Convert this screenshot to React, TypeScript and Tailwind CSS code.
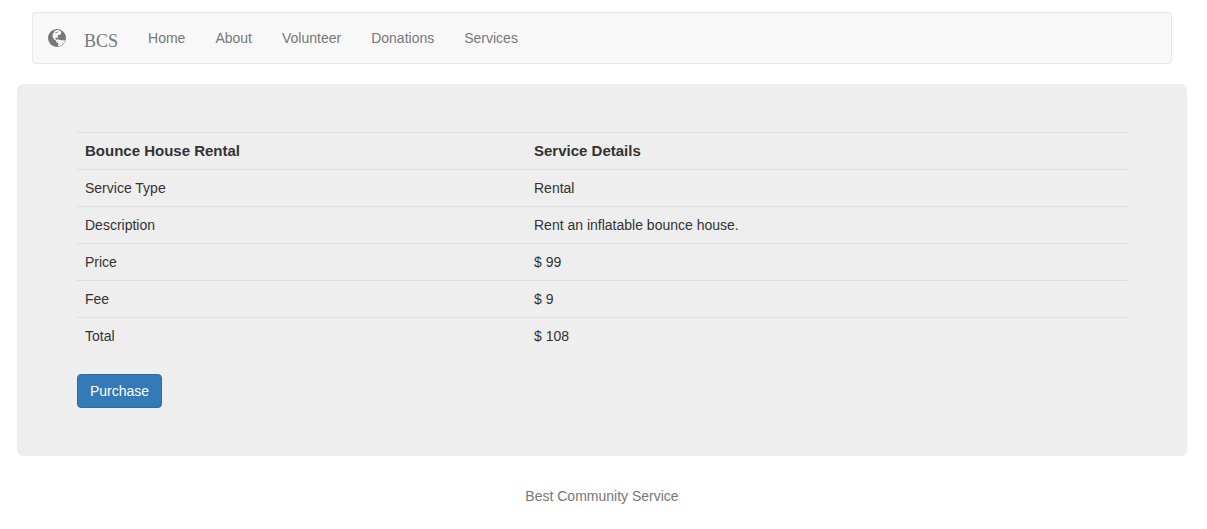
const links = ["Home", "About", "Volunteer", "Donations", "Services"];

const details = [
  ["Service Type", "Rental"],
  ["Description", "Rent an inflatable bounce house."],
  ["Price", "$ 99"],
  ["Fee", "$ 9"],
  ["Total", "$ 108"],
];

function Globe() {
  return (
    <svg viewBox="0 0 54 54" className="size-[18px]" aria-hidden="true">
      <circle cx="27" cy="27" r="27" fill="#777777" />
      <path
        fill="#f8f8f8"
        d="M20 5L28 3L36 5L40 9L39 15L35 18L31 17L28 21L31 23L29 26L24 26L21 29L26 32L31 31L36 33L42 34L51 34L48 41L42 47L34 51L30 51L31 45L29 42L25 39L24 35L18 31L14 24L14 16L17 11Z"
      />
      <path fill="#777777" d="M23 9L29 8L27 12L22 13Z" />
    </svg>
  );
}

export default function App() {
  return (
    <div className="bg-white pt-3 pr-5 pl-[17px] font-['Liberation_Sans',Arial,sans-serif] text-sm leading-5 text-[#333333]">
      <header className="px-[15px]">
        <nav className="flex flex-wrap items-center rounded border border-[#e7e7e7] bg-[#f8f8f8] text-[#777777]">
          <a href="#" className="flex items-center gap-[18px] p-[15px] text-lg leading-5">
            <Globe />
            <span className="pt-1.5 font-['Liberation_Serif','Times_New_Roman',serif] leading-[14px]">BCS</span>
          </a>
          <ul className="flex flex-wrap">
            {links.map((link) => (
              <li key={link}>
                <a href="#" className="block p-[15px]">
                  {link}
                </a>
              </li>
            ))}
          </ul>
        </nav>
      </header>

      <main className="mt-5 rounded-md bg-[#eeeeee] px-[60px] py-12">
        <table className="mb-5 w-full border-collapse text-left">
          <thead>
            <tr className="border-t border-[#dddddd] text-[15px] leading-5">
              <th className="w-[449px] p-2 font-bold">Bounce House Rental</th>
              <th className="p-2 font-bold">Service Details</th>
            </tr>
          </thead>
          <tbody>
            {details.map(([name, value]) => (
              <tr key={name} className="border-t border-[#dddddd]">
                <td className="p-2">{name}</td>
                <td className="p-2">{value}</td>
              </tr>
            ))}
          </tbody>
        </table>
        <button
          type="button"
          className="block rounded border border-[#2e6da4] bg-[#337ab7] px-3 py-1.5 text-white"
        >
          Purchase
        </button>
      </main>

      <footer className="py-[30px] text-center text-[#777777]">Best Community Service</footer>
    </div>
  );
}
